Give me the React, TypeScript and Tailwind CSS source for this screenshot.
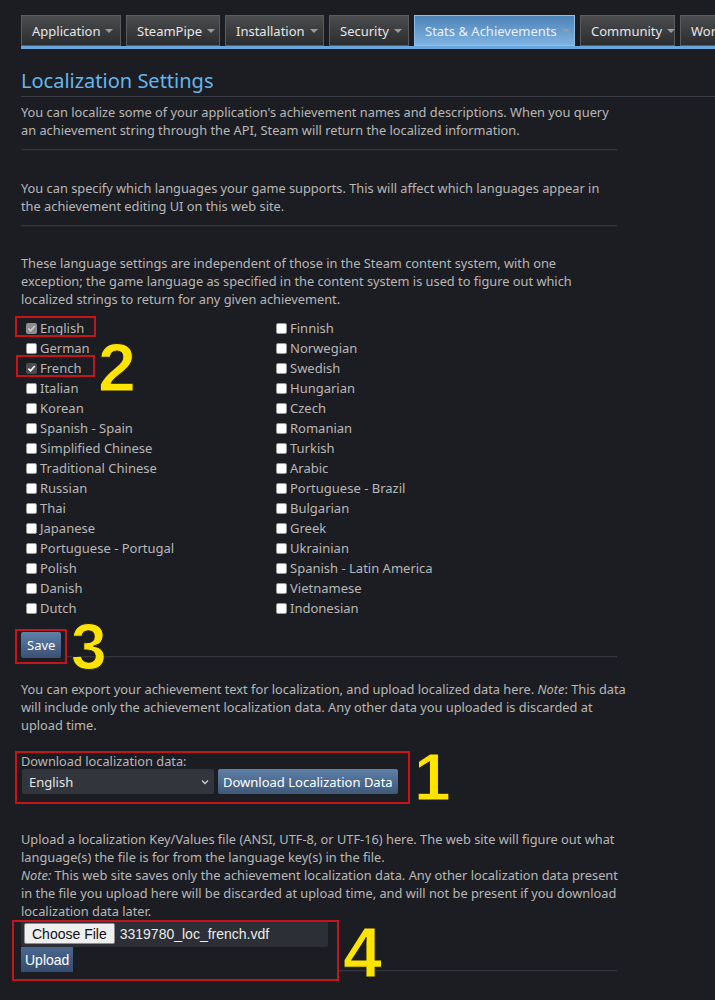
import React from "react";

const tabs = [
  { label: "Application", w: "w-[100px]" },
  { label: "SteamPipe", w: "w-[94px]" },
  { label: "Installation", w: "w-[99px]" },
  { label: "Security", w: "w-[80px]" },
  { label: "Stats & Achievements", w: "w-[161px]", active: true },
  { label: "Community", w: "w-[95px]" },
  { label: "Workshop", w: "w-[100px]" },
];

const left = [
  "English",
  "German",
  "French",
  "Italian",
  "Korean",
  "Spanish - Spain",
  "Simplified Chinese",
  "Traditional Chinese",
  "Russian",
  "Thai",
  "Japanese",
  "Portuguese - Portugal",
  "Polish",
  "Danish",
  "Dutch",
];

const right = [
  "Finnish",
  "Norwegian",
  "Swedish",
  "Hungarian",
  "Czech",
  "Romanian",
  "Turkish",
  "Arabic",
  "Portuguese - Brazil",
  "Bulgarian",
  "Greek",
  "Ukrainian",
  "Spanish - Latin America",
  "Vietnamese",
  "Indonesian",
];

function Box({ state }: { state?: "disabled" | "checked" }) {
  if (state === "disabled") {
    return (
      <span className="flex h-[11px] w-[11px] items-center justify-center rounded-[2px] bg-[#8b8d90]">
        <svg width="9" height="9" viewBox="0 0 10 10">
          <path d="M1.5 5.2 L4 7.6 L8.6 2.2" stroke="#c9cacc" strokeWidth="1.8" fill="none" />
        </svg>
      </span>
    );
  }
  if (state === "checked") {
    return (
      <span className="flex h-[11px] w-[11px] items-center justify-center rounded-[2px] bg-[#4a4c50]">
        <svg width="9" height="9" viewBox="0 0 10 10">
          <path d="M1.5 5.2 L4 7.6 L8.6 2.2" stroke="#ffffff" strokeWidth="1.8" fill="none" />
        </svg>
      </span>
    );
  }
  return <span className="h-[11px] w-[11px] rounded-[2px] border border-[#9a9a9a] bg-white" />;
}

function Lang({ name }: { name: string }) {
  const state = name === "English" ? "disabled" : name === "French" ? "checked" : undefined;
  return (
    <div className="flex h-[20px] items-center gap-[3px] pl-[5px] text-[13px]">
      <Box state={state} />
      <span>{name}</span>
    </div>
  );
}

function Big({ n, className }: { n: string; className: string }) {
  return (
    <span
      className={
        "absolute font-['Liberation_Sans',sans-serif] font-black leading-none text-[#ffe400] [-webkit-text-stroke:1px_#1b1d23] " +
        className
      }
    >
      {n}
    </span>
  );
}

function Rule() {
  return <div className="mt-[10px] h-[2px] w-[596px] border-t border-[#33363d] bg-[#22242a]" />;
}

// lines are broken where the reference breaks them
function Para({ lines, className }: { lines: React.ReactNode[]; className: string }) {
  return (
    <div className={className}>
      {lines.map((l, i) => (
        <div key={i} className="whitespace-nowrap">
          {l}
        </div>
      ))}
    </div>
  );
}

export default function App() {
  return (
    <div className="relative min-h-[1000px] w-[715px] overflow-hidden bg-[#1b1d23] font-['Noto_Sans',sans-serif] text-[12.8px] leading-[18px] text-[#b9b8b6]">
      <nav className="flex gap-[5px] pl-[21px] pt-[15px]">
        {tabs.map((t) => (
          <div
            key={t.label}
            className={
              "flex h-[31px] shrink-0 items-center gap-[5px] border px-[10px] text-[13px] " +
              t.w +
              (t.active
                ? " border-[#8fbde6] bg-gradient-to-b from-[#4e83b8] to-[#7fb3e2] text-[#e8f1fa]"
                : " border-[#5b5c5e] bg-gradient-to-b from-[#4b4c4e] to-[#2c2d2f] text-[#e6e6e6]")
            }
          >
            <span className="whitespace-nowrap">{t.label}</span>
            <span className="mt-[1px] h-0 w-0 border-x-[4px] border-t-[4px] border-x-transparent border-t-[#9a9b9d]" />
          </div>
        ))}
      </nav>
      <div className="ml-[21px] h-[3px] w-[700px] bg-[#67a6dd]" />

      <div className="pl-[21px]">
        <h1 className="mt-[19px] w-[700px] border-b border-[#3b3e45] pb-[2px] text-[20px] leading-[26px] text-[#66b6ea]">
          Localization Settings
        </h1>

        <Para
          className="mt-[6px]"
          lines={[
            "You can localize some of your application's achievement names and descriptions. When you query",
            "an achievement string through the API, Steam will return the localized information.",
          ]}
        />
        <Rule />

        <Para
          className="mt-[28px]"
          lines={[
            "You can specify which languages your game supports. This will affect which languages appear in",
            "the achievement editing UI on this web site.",
          ]}
        />
        <Rule />

        <Para
          className="mt-[27px]"
          lines={[
            "These language settings are independent of those in the Steam content system, with one",
            "exception; the game language as specified in the content system is used to figure out which",
            "localized strings to return for any given achievement.",
          ]}
        />

        <div className="mt-[10px] grid w-[596px] grid-cols-[250px_1fr]">
          <div>
            {left.map((l) => (
              <Lang key={l} name={l} />
            ))}
          </div>
          <div>
            {right.map((l) => (
              <Lang key={l} name={l} />
            ))}
          </div>
        </div>

        <div className="mt-[14px] flex w-[596px] items-end gap-[6px]">
          <button
            type="button"
            className="h-[26px] rounded-[2px] bg-gradient-to-b from-[#5e80a8] to-[#3a5173] px-[6px] text-[13px] text-white"
          >
            Save
          </button>
          <div className="h-[2px] flex-1 border-t border-[#33363d] bg-[#22242a]" />
        </div>

        <Para
          className="mt-[22px]"
          lines={[
            <>
              You can export your achievement text for localization, and upload localized data here. <i>Note</i>:
              This data
            </>,
            "will include only the achievement localization data. Any other data you uploaded is discarded at",
            "upload time.",
          ]}
        />

        <div className="mt-[19px] leading-[16px]">Download localization data:</div>
        <div className="flex gap-[4px] pl-[1px]">
          <div className="flex h-[25px] w-[192px] items-center justify-between rounded-[2px] bg-[#32353b] pl-[7px] pr-[4px] text-[13px] text-[#e6e6e6]">
            <span>English</span>
            <svg width="10" height="10" viewBox="0 0 10 10">
              <path d="M2 3.5 L5 6.5 L8 3.5" stroke="#d0d0d0" strokeWidth="1.3" fill="none" />
            </svg>
          </div>
          <button
            type="button"
            className="h-[25px] rounded-[2px] bg-gradient-to-b from-[#5e80a8] to-[#3e5878] px-[5px] text-[13px] text-white"
          >
            Download Localization Data
          </button>
        </div>

        <Para
          className="mt-[36px]"
          lines={[
            "Upload a localization Key/Values file (ANSI, UTF-8, or UTF-16) here. The web site will figure out what",
            "language(s) the file is for from the language key(s) in the file.",
            <>
              <i>Note:</i> This web site saves only the achievement localization data. Any other localization data present
            </>,
            "in the file you upload here will be discarded at upload time, and will not be present if you download",
            "localization data later.",
          ]}
        />

        <div className="flex h-[27px] w-[307px] items-center gap-[5px] rounded-[2px] bg-[#2c2f35] pl-[3px] font-['Liberation_Sans',sans-serif] text-[14px]">
          <span className="flex h-[21px] items-center rounded-[2px] border border-[#8f8f8f] bg-[#efefef] px-[7px] leading-none text-[#111]">
            Choose File
          </span>
          <span className="leading-none text-[#ececec]">3319780_loc_french.vdf</span>
        </div>
        <div className="flex w-[596px] items-end gap-[266px]">
          <button
            type="button"
            className="h-[25px] bg-gradient-to-b from-[#4a6790] to-[#344d70] px-[4px] font-['Liberation_Sans',sans-serif] text-[14px] text-white"
          >
            Upload
          </button>
          <div className="h-[2px] flex-1 border-t border-[#33363d] bg-[#22242a]" />
        </div>
      </div>

      {/* annotations */}
      <span className="absolute left-[15px] top-[316px] h-[21px] w-[81px] border-2 border-[#c4141c]" />
      <span className="absolute left-[16px] top-[355px] h-[22px] w-[79px] border-2 border-[#c4141c]" />
      <span className="absolute left-[15px] top-[629px] h-[35px] w-[52px] border-2 border-[#c4141c]" />
      <span className="absolute left-[15px] top-[751px] h-[53px] w-[395px] border-2 border-[#c4141c]" />
      <span className="absolute left-[12px] top-[920px] h-[61px] w-[327px] border-2 border-[#c4141c]" />
      <Big n="2" className="left-[98px] top-[333px] text-[68px]" />
      <Big n="3" className="left-[71px] top-[615px] text-[64px]" />
      <Big n="1" className="left-[414px] top-[744px] text-[66px]" />
      <Big n="4" className="left-[343px] top-[918px] text-[70px]" />
    </div>
  );
}
